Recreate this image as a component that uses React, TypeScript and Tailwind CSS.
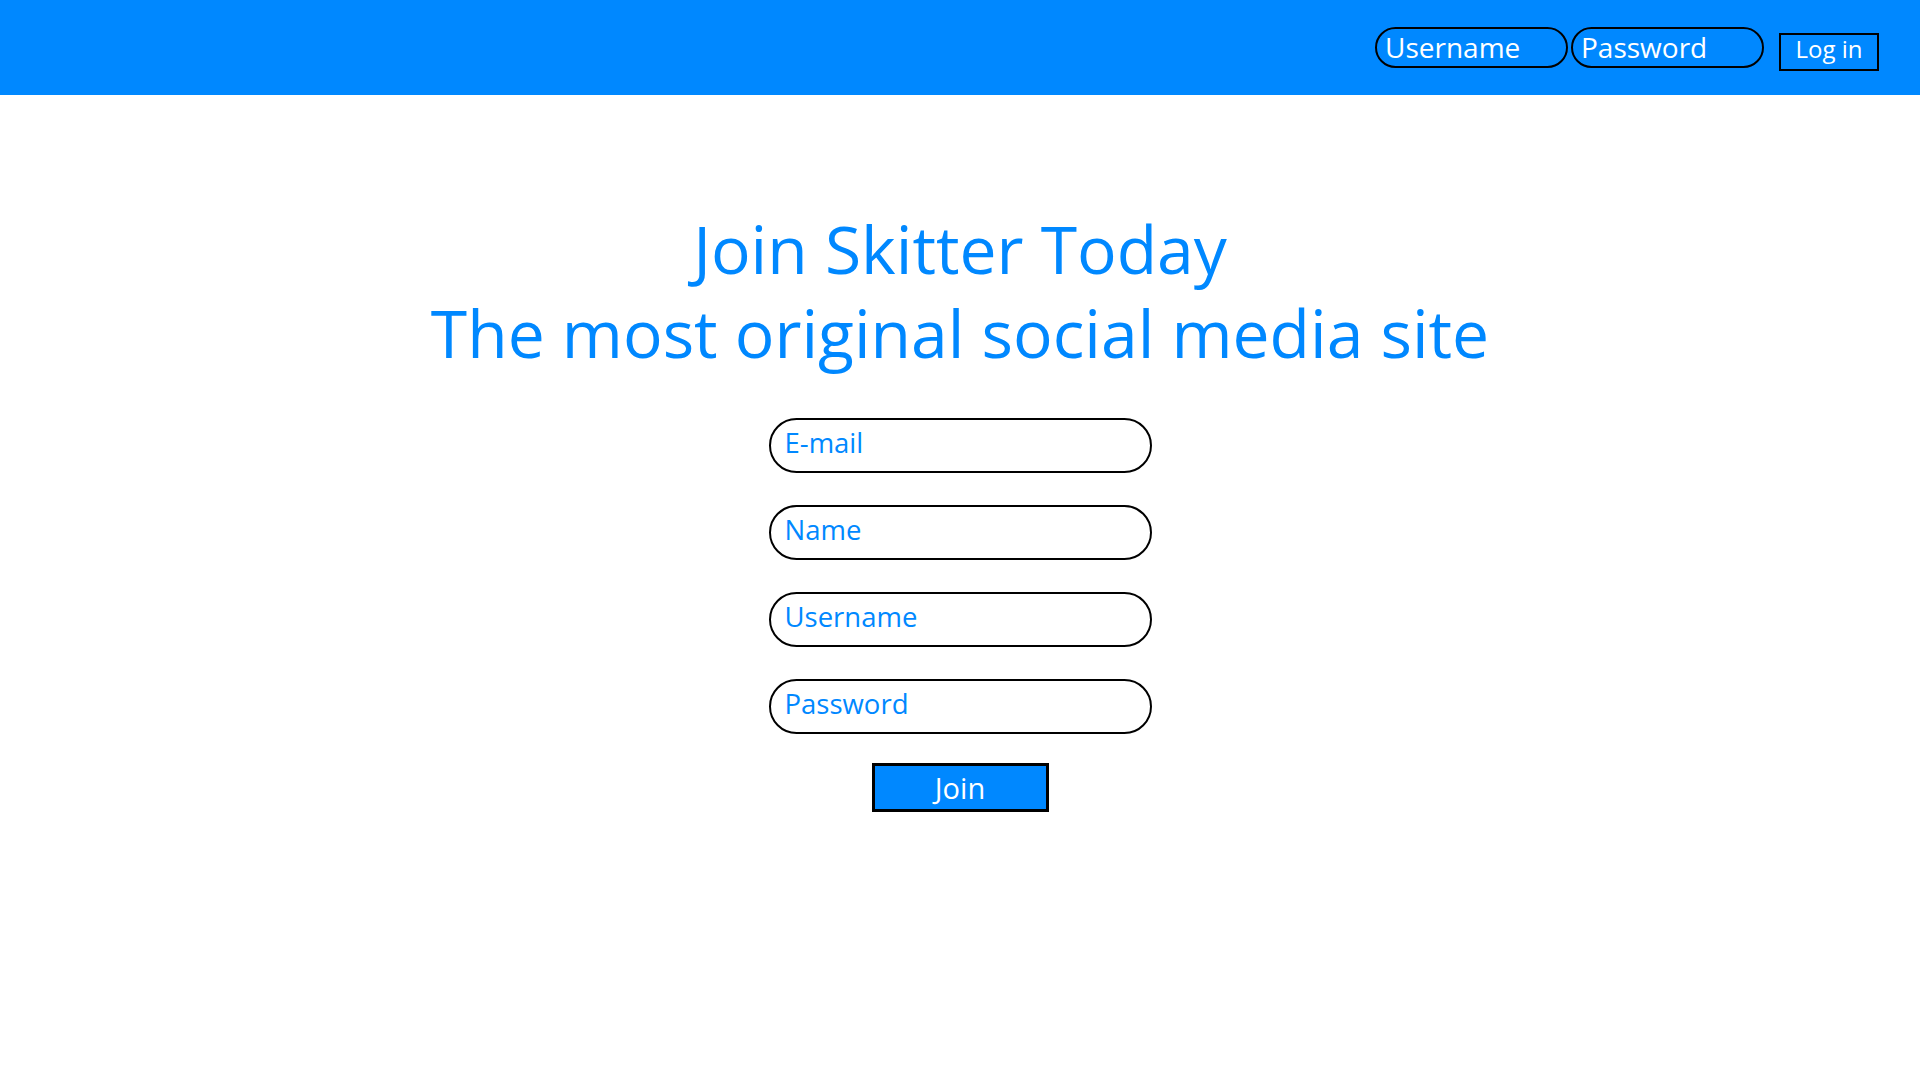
import React from 'react';

const font = { fontFamily: '"Open Sans", "Noto Sans", sans-serif' };

const fields = ['E-mail', 'Name', 'Username', 'Password'];

const Header = () => {
  return (
    <header className="flex h-[95px] items-start justify-end bg-[#0088ff] pr-[41px] pt-[27px]">
      <input
        className="h-[41px] w-[193px] rounded-full border-2 border-black bg-transparent px-[8px] pb-[2px] text-[28px] text-white outline-none placeholder:text-white"
        placeholder="Username"
      />
      <input
        className="ml-[3px] h-[41px] w-[193px] rounded-full border-2 border-black bg-transparent px-[8px] pb-[2px] text-[28px] text-white outline-none placeholder:text-white"
        placeholder="Password"
        type="password"
      />
      <button className="ml-[15px] mt-[6px] h-[38px] w-[100px] border-2 border-black pb-[6px] text-[24px] leading-none text-white">
        Log in
      </button>
    </header>
  );
};

export default function App() {
  return (
    <div className="min-h-screen bg-white" style={font}>
      <Header />
      <main className="flex flex-col items-center">
        <h1 className="mt-[111px] text-center text-[66px] leading-[84px] font-normal text-[#0088ff]">
          Join Skitter Today
          <br />
          The most original social media site
        </h1>
        <form className="mt-[44px] flex flex-col items-center gap-[32px]">
          {fields.map((f) => (
            <input
              key={f}
              type={f === 'Password' ? 'password' : 'text'}
              placeholder={f}
              className="h-[55px] w-[383px] rounded-full border-2 border-black bg-white px-[14px] pb-[6px] text-[27.5px] text-[#0088ff] outline-none placeholder:text-[#0088ff]"
            />
          ))}
          <button
            type="button"
            className="-mt-[3px] h-[49px] w-[177px] border-[3px] border-black bg-[#0088ff] pb-[4px] text-[29px] text-white"
          >
            Join
          </button>
        </form>
      </main>
    </div>
  );
}
